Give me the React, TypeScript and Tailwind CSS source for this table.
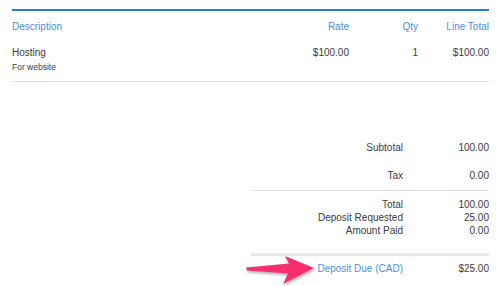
const font = { fontFamily: '"Liberation Sans", Arial, sans-serif' }

function TotalRow({ label, value, className = '' }: { label: string; value: string; className?: string }) {
  return (
    <div className={`grid grid-cols-[152px_1fr] ${className}`}>
      <span className="text-right">{label}</span>
      <span className="text-right">{value}</span>
    </div>
  )
}

export default function App() {
  return (
    <div
      className="relative w-[500px] h-[286px] overflow-hidden bg-white pt-[9px] pl-[12px] pr-[11px] text-[10px] text-[#3b3b3b]"
      style={font}
    >
      {/* Line items table */}
      <div className="h-[2px] bg-[#1f7ee0]" />
      <div className="grid grid-cols-[1fr_80px_69px_71px] pt-[10px] leading-[12px] text-[#4a8fe0]">
        <span>Description</span>
        <span className="text-right">Rate</span>
        <span className="text-right">Qty</span>
        <span className="text-right">Line Total</span>
      </div>
      <div className="grid grid-cols-[1fr_80px_69px_71px] mt-[14px] leading-[12px]">
        <div>
          <div>Hosting</div>
          <div className="mt-[3px] text-[8.5px] leading-[10px]">For website</div>
        </div>
        <span className="text-right">$100.00</span>
        <span className="text-right">1</span>
        <span className="text-right">$100.00</span>
      </div>
      <div className="mt-[9px] h-px bg-[#e3e3e3]" />

      {/* Totals */}
      <div className="ml-auto w-[238px] mt-[59px]">
        <TotalRow label="Subtotal" value="100.00" className="leading-[14px]" />
        <TotalRow label="Tax" value="0.00" className="mt-[14px] leading-[14px]" />
        <div className="mt-[7px] h-px bg-[#e3e3e3]" />
        <TotalRow label="Total" value="100.00" className="mt-[7px] leading-[13px]" />
        <TotalRow label="Deposit Requested" value="25.00" className="leading-[13px]" />
        <TotalRow label="Amount Paid" value="0.00" className="leading-[13px]" />
        <div className="mt-[16px] h-[3px] bg-[#e8e8e8]" />
        <div className="grid grid-cols-[152px_1fr] leading-[14px] mt-[6px]">
          <span className="text-right text-[#4a8fe0]">Deposit Due (CAD)</span>
          <span className="text-right">$25.00</span>
        </div>
      </div>

      {/* Annotation arrow */}
      <svg
        className="absolute left-0 top-0 pointer-events-none"
        width="500"
        height="286"
        viewBox="0 0 500 286"
        style={{ filter: 'drop-shadow(1px 2px 1.5px rgba(0,0,0,0.3))' }}
      >
        <path d="M246 267.5 L289 263.5 L285 256 L314 268 L283 284 L288 273.5 L247 270.5 Z" fill="#f7306d" />
      </svg>
    </div>
  )
}
